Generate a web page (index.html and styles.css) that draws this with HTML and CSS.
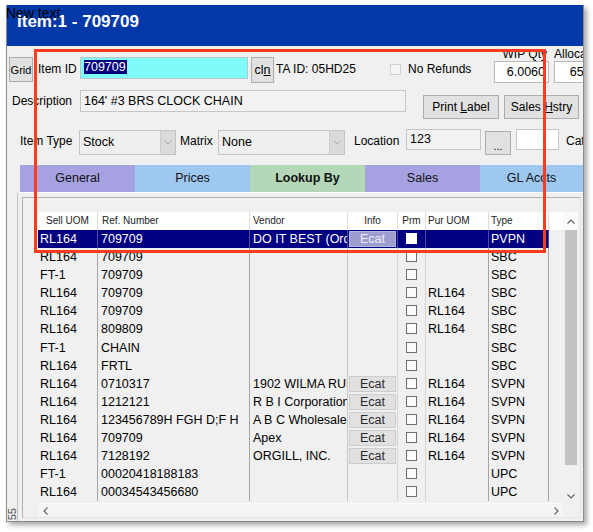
FILE: index.html
```html
<!DOCTYPE html>
<html>
<head>
<meta charset="utf-8">
<title>Item</title>
<link rel="stylesheet" href="styles.css">
</head>
<body>
<div class="window">
  <div class="titlebar">Item:1 - 709709</div>

  <div class="row row1">
    <button class="btn btn-grid">Grid</button>
    <span class="lbl lbl-itemid">Item ID</span>
    <div class="inp inp-itemid"><span class="selected-text">709709</span></div>
    <button class="btn btn-cln">cl<u>n</u></button>
    <span class="lbl lbl-taid">TA ID: 05HD25</span>
    <span class="chk-dis"></span>
    <span class="lbl lbl-noref">No Refunds</span>
    <div class="qty qty-wip">
      <div class="qlbl qlbl-right">WIP Qty</div>
      <div class="inp qinp">6.0060</div>
    </div>
    <div class="qty qty-alloc">
      <div class="qlbl">Allocated</div>
      <div class="inp qinp">65.000</div>
    </div>
  </div>

  <div class="row row2">
    <span class="lbl lbl-desc">Description</span>
    <div class="inp inp-desc">164' #3 BRS CLOCK CHAIN</div>
    <button class="btn btn-print">Print <u>L</u>abel</button>
    <button class="btn btn-sales">Sales <u>H</u>stry</button>
  </div>

  <div class="row row3">
    <span class="lbl lbl-type">Item Type</span>
    <div class="combo combo-type"><span class="combo-val">Stock</span><span class="combo-arrow"><svg width="8" height="5" viewBox="0 0 8 5"><polyline points="0.5,0.5 4,4 7.5,0.5" fill="none" stroke="#a8a8a8" stroke-width="1"/></svg></span></div>
    <span class="lbl lbl-matrix">Matrix</span>
    <div class="combo combo-matrix"><span class="combo-val">None</span><span class="combo-arrow"><svg width="8" height="5" viewBox="0 0 8 5"><polyline points="0.5,0.5 4,4 7.5,0.5" fill="none" stroke="#a8a8a8" stroke-width="1"/></svg></span></div>
    <span class="lbl lbl-loc">Location</span>
    <div class="inp inp-loc">123</div>
    <button class="btn btn-dots">...</button>
    <div class="inp inp-white"></div>
    <span class="lbl lbl-cat">Cat</span>
  </div>

  <div class="tabs">
    <div class="tab tab-purple">General</div>
    <div class="tab tab-blue">Prices</div>
    <div class="tab tab-green tab-active">Lookup By</div>
    <div class="tab tab-purple">Sales</div>
    <div class="tab tab-blue tab-last">GL Accts</div>
  </div>

  <div class="bottom">
    <div class="strip"><span class="rot">55</span></div>
    <div class="panel">
      <div class="inner">
        <div class="grid">
          <div class="gmain">
            <div class="grow ghead">
              <div class="c c1 ctr">Sell UOM</div>
              <div class="c c2">Ref. Number</div>
              <div class="c c3">Vendor</div>
              <div class="c c4 ctr">Info</div>
              <div class="c c5 ctr">Prm</div>
              <div class="c c6">Pur UOM</div>
              <div class="c c7">Type</div>
              <div class="c c8"></div>
            </div>
            <div class="grow selrow">
              <div class="c c1">RL164</div><div class="c c2">709709</div><div class="c c3">DO IT BEST (Order Direct)</div><div class="c c4"><span class="ecat">Ecat</span></div><div class="c c5"><span class="cb"></span></div><div class="c c6"></div><div class="c c7">PVPN</div><div class="c c8"></div>
            </div>
            <div class="grow">
              <div class="c c1">RL164</div><div class="c c2">709709</div><div class="c c3"></div><div class="c c4"></div><div class="c c5"><span class="cb"></span></div><div class="c c6"></div><div class="c c7">SBC</div><div class="c c8"></div>
            </div>
            <div class="grow">
              <div class="c c1">FT-1</div><div class="c c2">709709</div><div class="c c3"></div><div class="c c4"></div><div class="c c5"><span class="cb"></span></div><div class="c c6"></div><div class="c c7">SBC</div><div class="c c8"></div>
            </div>
            <div class="grow">
              <div class="c c1">RL164</div><div class="c c2">709709</div><div class="c c3"></div><div class="c c4"></div><div class="c c5"><span class="cb"></span></div><div class="c c6">RL164</div><div class="c c7">SBC</div><div class="c c8"></div>
            </div>
            <div class="grow">
              <div class="c c1">RL164</div><div class="c c2">709709</div><div class="c c3"></div><div class="c c4"></div><div class="c c5"><span class="cb"></span></div><div class="c c6">RL164</div><div class="c c7">SBC</div><div class="c c8"></div>
            </div>
            <div class="grow">
              <div class="c c1">RL164</div><div class="c c2">809809</div><div class="c c3"></div><div class="c c4"></div><div class="c c5"><span class="cb"></span></div><div class="c c6">RL164</div><div class="c c7">SBC</div><div class="c c8"></div>
            </div>
            <div class="grow">
              <div class="c c1">FT-1</div><div class="c c2">CHAIN</div><div class="c c3"></div><div class="c c4"></div><div class="c c5"><span class="cb"></span></div><div class="c c6"></div><div class="c c7">SBC</div><div class="c c8"></div>
            </div>
            <div class="grow">
              <div class="c c1">RL164</div><div class="c c2">FRTL</div><div class="c c3"></div><div class="c c4"></div><div class="c c5"><span class="cb"></span></div><div class="c c6"></div><div class="c c7">SBC</div><div class="c c8"></div>
            </div>
            <div class="grow">
              <div class="c c1">RL164</div><div class="c c2">0710317</div><div class="c c3">1902 WILMA RUDOLPH</div><div class="c c4"><span class="ecat">Ecat</span></div><div class="c c5"><span class="cb"></span></div><div class="c c6">RL164</div><div class="c c7">SVPN</div><div class="c c8"></div>
            </div>
            <div class="grow">
              <div class="c c1">RL164</div><div class="c c2">1212121</div><div class="c c3">R B I Corporation</div><div class="c c4"><span class="ecat">Ecat</span></div><div class="c c5"><span class="cb"></span></div><div class="c c6">RL164</div><div class="c c7">SVPN</div><div class="c c8"></div>
            </div>
            <div class="grow">
              <div class="c c1">RL164</div><div class="c c2">123456789H FGH D;F H</div><div class="c c3">A B C Wholesale</div><div class="c c4"><span class="ecat">Ecat</span></div><div class="c c5"><span class="cb"></span></div><div class="c c6">RL164</div><div class="c c7">SVPN</div><div class="c c8"></div>
            </div>
            <div class="grow">
              <div class="c c1">RL164</div><div class="c c2">709709</div><div class="c c3">Apex</div><div class="c c4"><span class="ecat">Ecat</span></div><div class="c c5"><span class="cb"></span></div><div class="c c6">RL164</div><div class="c c7">SVPN</div><div class="c c8"></div>
            </div>
            <div class="grow">
              <div class="c c1">RL164</div><div class="c c2">7128192</div><div class="c c3">ORGILL, INC.</div><div class="c c4"><span class="ecat">Ecat</span></div><div class="c c5"><span class="cb"></span></div><div class="c c6">RL164</div><div class="c c7">SVPN</div><div class="c c8"></div>
            </div>
            <div class="grow">
              <div class="c c1">FT-1</div><div class="c c2">00020418188183</div><div class="c c3"></div><div class="c c4"></div><div class="c c5"><span class="cb"></span></div><div class="c c6"></div><div class="c c7">UPC</div><div class="c c8"></div>
            </div>
            <div class="grow">
              <div class="c c1">RL164</div><div class="c c2">00034543456680</div><div class="c c3"></div><div class="c c4"></div><div class="c c5"><span class="cb"></span></div><div class="c c6"></div><div class="c c7">UPC</div><div class="c c8"></div>
            </div>
          </div>
          <div class="vscroll">
            <div class="vs-up"><svg width="8" height="5" viewBox="0 0 8 5"><polyline points="0.5,4.5 4,1 7.5,4.5" fill="none" stroke="#606060" stroke-width="1.1"/></svg></div>
            <div class="vs-thumb"></div>
            <div class="vs-space"></div>
            <div class="vs-down"><svg width="8" height="5" viewBox="0 0 8 5"><polyline points="0.5,0.5 4,4 7.5,0.5" fill="none" stroke="#606060" stroke-width="1.1"/></svg></div>
          </div>
          <div class="hscroll">
            <svg width="5" height="8" viewBox="0 0 5 8"><polyline points="4.5,0.5 1,4 4.5,7.5" fill="none" stroke="#606060" stroke-width="1.1"/></svg>
            <svg width="5" height="8" viewBox="0 0 5 8"><polyline points="0.5,0.5 4,4 0.5,7.5" fill="none" stroke="#606060" stroke-width="1.1"/></svg>
          </div>
          <div class="corner"></div>
        </div>
      </div>
    </div>
  </div>
</div>

<div class="newtext">New text</div>
<div class="redbox"></div>
</body>
</html>
```

FILE: styles.css
```css
* { box-sizing: border-box; }
html, body { margin: 0; padding: 0; background: #ffffff; }
body {
  font-family: "Liberation Sans", Arial, sans-serif;
  color: #000;
  width: 593px;
  height: 532px;
  overflow: hidden;
  position: relative;
}

.window {
  margin: 5px 0 0 6px;
  width: 578px;
  height: 517px;
  background: #f0f0f0;
  border-left: 1px solid #8c8c8c;
  border-right: 1px solid #8c8c8c;
  border-bottom: 1px solid #8c8c8c;
  box-shadow: 3px 3px 5px rgba(0, 0, 0, 0.35);
  display: flex;
  flex-direction: column;
  overflow: hidden;
}

.titlebar {
  flex: 0 0 41px;
  height: 41px;
  background: #0238a8;
  color: #fff;
  font-weight: bold;
  font-size: 17px;
  line-height: 20px;
  padding: 7px 0 0 10px;
  white-space: nowrap;
}

.row { display: flex; align-items: flex-start; flex-shrink: 0; white-space: nowrap; }
.row > * { flex-shrink: 0; }
.lbl { font-size: 12px; display: block; }

.btn {
  font-family: "Liberation Sans", Arial, sans-serif;
  font-size: 12px;
  color: #000;
  background: #e1e1e1;
  border: 1px solid #adadad;
  padding: 0;
  margin: 0;
  display: block;
  text-align: center;
}
.btn u { text-underline-offset: 1px; }

.inp {
  font-size: 12.5px;
  border: 1px solid #c6c6c6;
  background: #f2f2f2;
  white-space: nowrap;
  overflow: hidden;
}

/* Row 1 */
.row1 { margin-top: 11px; padding-left: 2px; height: 26px; }
.btn-grid { width: 24px; height: 25px; font-size: 11px; }
.lbl-itemid { margin-left: 5px; width: 42px; line-height: 24px; }
.inp-itemid {
  width: 168px; height: 22px;
  background: #80fafa;
  border-color: #b4c8c8;
  padding: 2px 0 0 3px;
  line-height: 14px;
}
.selected-text { background: #000080; color: #fff; display: inline-block; padding: 0 1px 0 0; }
.btn-cln { margin-left: 3px; width: 23px; height: 26px; font-size: 12.5px; }
.lbl-taid { margin-left: 2px; width: 114px; line-height: 25px; }
.chk-dis {
  display: block;
  width: 11px; height: 11px;
  margin-top: 7px;
  border: 1px solid #cfcfcf;
  background: #f6f6f6;
}
.lbl-noref { margin-left: 7px; width: 86px; line-height: 25px; }
.qty { width: 55px; margin-top: -10px; }
.qty-alloc { margin-left: 5px; width: 58px; }
.qlbl { font-size: 12px; line-height: 14px; height: 14px; white-space: nowrap; }
.qlbl-right { text-align: right; padding-right: 2px; }
.qinp {
  height: 22px;
  background: #fff;
  border-color: #b9b9b9;
  text-align: right;
  padding-right: 3px;
  line-height: 21px;
}

/* Row 2 */
.row2 { margin-top: 7px; padding-left: 5px; height: 29px; }
.lbl-desc { width: 68px; line-height: 22px; }
.inp-desc { width: 326px; height: 22px; padding-left: 3px; line-height: 20px; }
.btn-print { margin-left: 17px; margin-top: 5px; width: 76px; height: 24px; }
.btn-sales { margin-left: 5px; margin-top: 5px; width: 75px; height: 24px; }

/* Row 3 */
.row3 { margin-top: 10px; padding-left: 13px; height: 26px; }
.lbl-type { width: 59px; line-height: 25px; }
.combo {
  margin-top: 1px;
  height: 25px;
  border: 1px solid #c4c4c4;
  background: #efefef;
  display: flex;
  align-items: stretch;
  font-size: 12.5px;
}
.combo-type { width: 97px; }
.combo-matrix { width: 127px; }
.combo-val { flex: 1; padding-left: 3px; line-height: 23px; }
.combo-arrow {
  width: 15px;
  background: #dadada;
  border-left: 1px solid #cdcdcd;
  display: flex;
  align-items: center;
  justify-content: center;
}
.lbl-matrix { margin-left: 4px; width: 38px; line-height: 25px; }
.lbl-loc { margin-left: 9px; width: 52px; line-height: 24px; }
.inp-loc { width: 75px; height: 21px; padding-left: 3px; line-height: 18px; }
.btn-dots { margin-left: 4px; margin-top: 2px; width: 26px; height: 24px; font-size: 11px; line-height: 24px; padding-top: 2px; }
.inp-white { margin-left: 5px; width: 43px; height: 21px; background: #fff; }
.lbl-cat { margin-left: 7px; line-height: 24px; }

/* Tabs */
.tabs { display: flex; margin-top: 10px; margin-left: 13px; height: 27px; flex-shrink: 0; }
.tab { width: 115px; flex-shrink: 0; text-align: center; font-size: 12.5px; line-height: 27px; color: #111; }
.tab-last { flex: 1; width: auto; }
.tab-purple { background: #a6a2e2; }
.tab-blue { background: #9fc8f1; }
.tab-green { background: #b3d7b7; }
.tab-active { font-weight: bold; }

/* Bottom area */
.bottom { flex: 1; display: flex; min-height: 0; }
.strip { width: 10px; flex-shrink: 0; display: flex; align-items: flex-end; justify-content: center; padding-bottom: 1px; }
.rot {
  writing-mode: vertical-rl;
  transform: rotate(180deg);
  font-size: 11px;
  color: #505050;
  line-height: 10px;
}
.panel {
  flex: 1;
  border-top: 1px solid #ffffff;
  border-left: 1px solid #c2c2c2;
  padding: 4px 2px 3px 4px;
  display: flex;
}
.inner {
  flex: 1;
  border: 1px solid #b2b2b2;
  border-right-color: #e4e4e4;
  border-bottom-color: #e4e4e4;
  padding: 14px 2px 0 15px;
}

/* Grid */
.grid {
  width: 540px;
  height: 305px;
  display: grid;
  grid-template-columns: 525px 15px;
  grid-template-rows: 291px 14px;
  background: #f0f0f0;
}
.gmain { overflow: hidden; }
.grow {
  display: grid;
  grid-template-columns: 60px 152px 98px 50px 28px 63px 60px 14px;
  height: 18.1px;
  font-size: 12.5px;
  line-height: 18px;
}
.ghead { height: 18px; }
.c {
  border-right: 1px solid #a6a6a6;
  white-space: nowrap;
  overflow: hidden;
  padding-left: 2px;
}
.c2 { padding-left: 3px; }
.c3 { padding-left: 3px; border-right-color: #c8c8c8; }
.c4 { padding-left: 0; border-right-color: #d6d6d6; }
.c5 { padding-left: 0; border-right-color: #d6d6d6; }
.c6 { padding-left: 2px; }
.c7 { padding-left: 2px; }
.c8 { border-right: none; }
.ctr { text-align: center; padding-left: 0; }

.ghead { background: #fff; font-size: 10px; color: #222; }
.ghead .c { border-right-color: #dedede; }
.ghead .c2 { padding-left: 4px; }
.ghead .c6 { padding-left: 2px; }
.ghead .c8 { background: #fff; }

.selrow .c1, .selrow .c2, .selrow .c3, .selrow .c4, .selrow .c5, .selrow .c6, .selrow .c7 {
  background: #000080;
  color: #fff;
  border-right-color: #4a4aa0;
}

.ecat {
  display: block;
  margin: 1px 1px 0 1px;
  height: 16px;
  line-height: 15px;
  background: #e1e1e1;
  border: 1px solid #cdcdcd;
  text-align: center;
  color: #2a2a2a;
}
.selrow .ecat { background: #9d9dd0; border-color: #b4b4de; color: #eeeefa; }

.cb {
  display: block;
  width: 11px;
  height: 11px;
  margin: 3px auto 0;
  border: 1px solid #6e6e6e;
  background: #fbfbfb;
}
.selrow .cb { background: #fff; border-color: #fff; }

.vscroll {
  display: flex;
  flex-direction: column;
  background: #f0f0f0;
}
.vs-up {
  height: 18px;
  background: #fafafa;
  display: flex;
  align-items: center;
  justify-content: center;
  padding-left: 1px;
}
.vs-thumb { height: 235px; margin: 0 1px 0 2px; background: #c2c2c2; }
.vs-space { flex: 1; }
.vs-down {
  height: 13px;
  display: flex;
  align-items: center;
  justify-content: center;
  padding-left: 1px;
}
.hscroll {
  display: flex;
  align-items: center;
  justify-content: space-between;
  padding: 0 4px 0 5px;
  background: #f5f5f5;
  border-top: 1px solid #fcfcfc;
}
.corner { background: #f0f0f0; }

/* Overlays */
.newtext {
  position: absolute;
  left: 6px;
  top: 5px;
  font-size: 14px;
  line-height: 16px;
  color: #000;
}
.redbox {
  position: absolute;
  left: 34px;
  top: 49px;
  width: 512px;
  height: 204px;
  border: 3px solid #fb3c1c;
}
```
